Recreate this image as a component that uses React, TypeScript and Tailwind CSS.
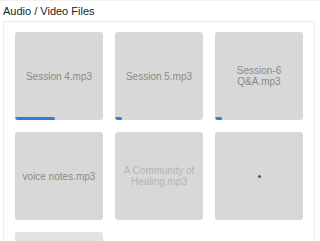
import React from 'react';

interface MediaFile {
    name: string;
    progress: number;
    faded?: boolean;
    loading?: boolean;
}

const files: MediaFile[] = [
    { name: 'Session 4.mp3', progress: 45 },
    { name: 'Session 5.mp3', progress: 8 },
    { name: 'Session-6 Q&A.mp3', progress: 8 },
    { name: 'voice notes.mp3', progress: 0 },
    { name: 'A Community of Healing.mp3', progress: 0, faded: true },
    { name: '', progress: 0, loading: true },
    { name: '', progress: 0 },
];

const App = () => {
    return (
        <div className="w-[320px] h-[241px] overflow-hidden bg-white font-['Liberation_Sans',sans-serif] border-t border-[#f2f2f2]">
            <h2 className="pl-[3px] pt-[4px] text-[11px] leading-[13px] text-[#222]">Audio / Video Files</h2>
            <div className="ml-[3px] mt-[3px] w-[312px] border border-[#ececec] rounded-[2px] pt-[10px] pl-[11px]">
                <div className="grid grid-cols-[88px_88px_88px] gap-[12px]">
                    {files.map((file, i) => (
                        <div
                            key={i}
                            className={`relative h-[88px] rounded-[3px] overflow-hidden flex items-center justify-center px-[3px] text-center ${
                                i === 6 ? 'bg-[#e3e3e3]' : 'bg-[#d8d8d8]'
                            }`}
                        >
                            {file.loading ? (
                                <span className="w-[3px] h-[3px] rounded-full bg-[#555]"></span>
                            ) : (
                                <span
                                    className={`text-[10px] leading-[11px] ${
                                        file.faded ? 'text-[#b5b5b5]' : 'text-[#8a8a8a]'
                                    }`}
                                >
                                    {file.name}
                                </span>
                            )}
                            {file.progress > 0 && (
                                <div
                                    className="absolute left-0 bottom-0 h-[3px] rounded-full bg-[#2f7de1]"
                                    style={{ width: `${file.progress}%` }}
                                />
                            )}
                        </div>
                    ))}
                </div>
            </div>
        </div>
    );
};

export default App;
